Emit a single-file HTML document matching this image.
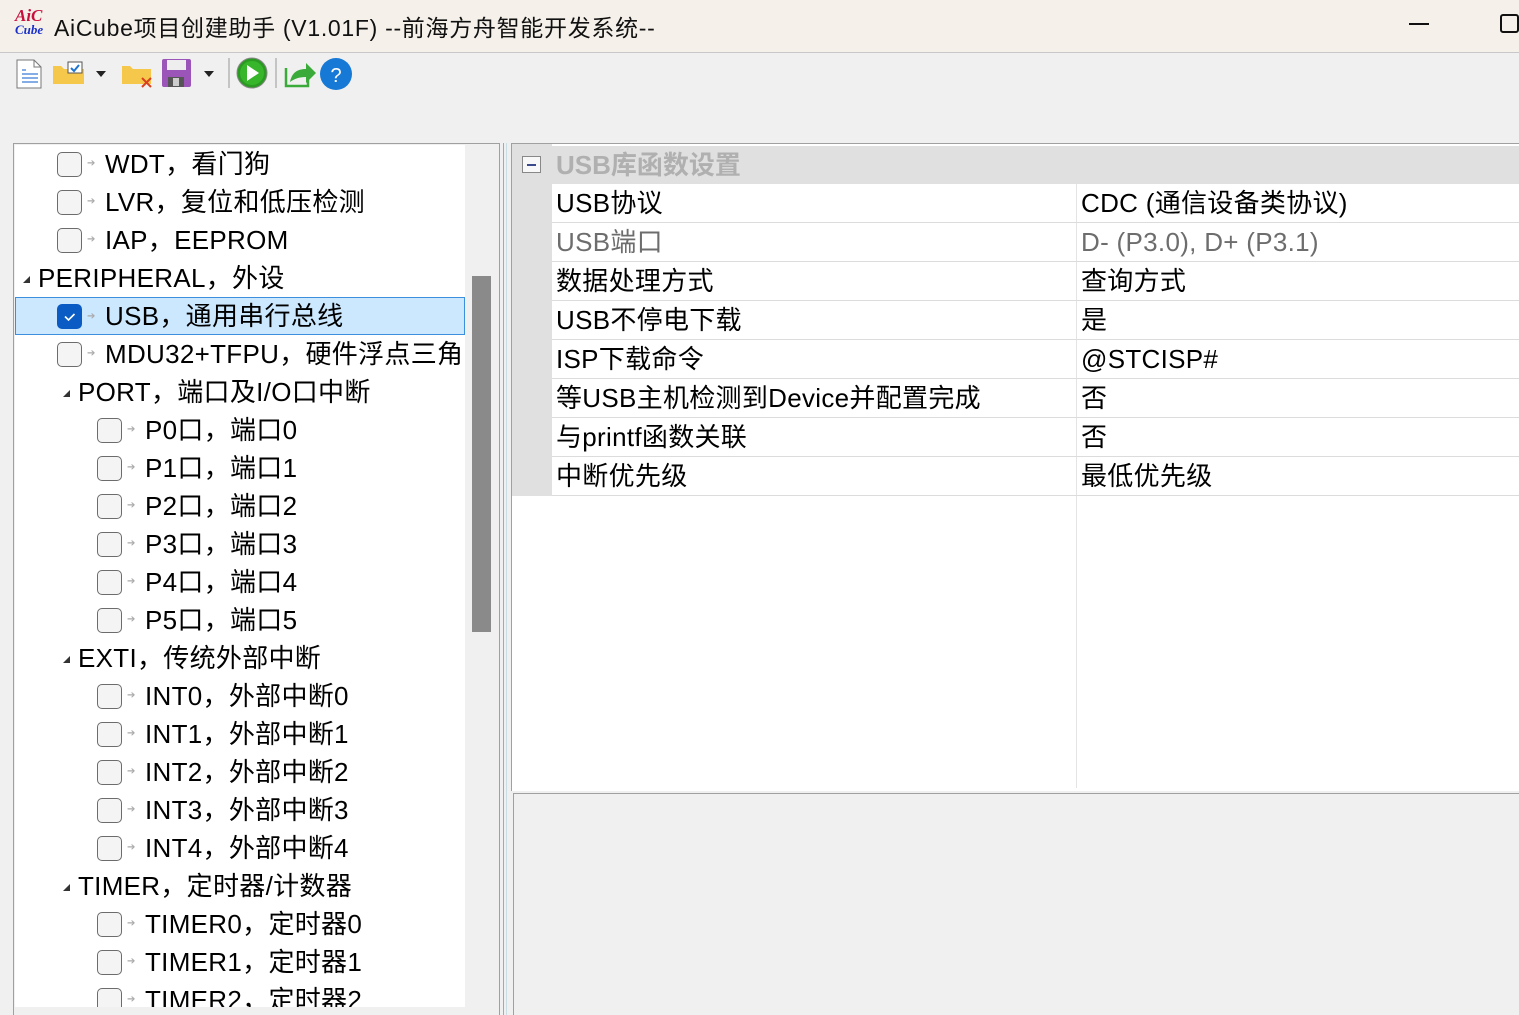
<!DOCTYPE html>
<html><head><meta charset="utf-8">
<style>
*{margin:0;padding:0;box-sizing:border-box}
body{width:1519px;height:1015px;overflow:hidden;background:#f0f0f0;font-family:"Liberation Sans","Noto Sans CJK SC",sans-serif;position:relative}
.abs{position:absolute}
.title{left:0;top:0;width:1519px;height:53px;background:#f5f1ea;border-bottom:1px solid #c8c8c8}
.tt{left:54px;top:9px;font-size:23px;color:#111;white-space:nowrap;letter-spacing:0.7px}
.tree{left:13px;top:143px;width:487px;height:872px;background:#f0f0f0;border:1px solid #a0a0a0;border-bottom:none}
.treew{left:15px;top:145px;width:450px;height:862px;background:#fff;overflow:hidden}
.row{position:absolute;height:38px;width:450px;font-size:26px;line-height:38px;color:#000;white-space:nowrap;letter-spacing:0.3px}
.cb{position:absolute;top:7px;width:25px;height:25px;border:1.5px solid #6c6c6c;border-radius:5px;background:#f4f4f4}
.cb.on{background:#0a5bc4;border-color:#0a5bc4}
.ar{position:absolute;top:0;font-size:10px;color:#aaa}
.tri{position:absolute;top:3px;font-size:7px;color:#333}
.t{position:absolute;top:0}
.grid{left:511px;top:143px;width:1008px;height:648px;background:#fff;border-top:1px solid #a0a0a0;border-left:1px solid #a0a0a0}
.grow{position:absolute;left:40px;width:968px;height:39px;border-bottom:1px solid #dcdcdc;font-size:26px;line-height:38px;white-space:nowrap;letter-spacing:0.3px}
.grow span{position:absolute;top:0}
</style></head><body>
<div class="abs title"></div>
<div class="abs" style="left:15px;top:8px;font:italic bold 17px 'Liberation Serif',serif;color:#c8103e;line-height:15px">AiC</div>
<div class="abs" style="left:15px;top:23px;font:italic bold 13px 'Liberation Serif',serif;color:#1a2fc8;line-height:14px">Cube</div>
<div class="abs tt">AiCube项目创建助手 (V1.01F) --前海方舟智能开发系统--</div>
<div class="abs" style="left:1409px;top:23px;width:20px;height:2px;background:#111"></div>
<div class="abs" style="left:1500px;top:14px;width:19px;height:19px;border:2px solid #111;border-radius:3px"></div>

<svg class="abs" style="left:10px;top:56px" width="350" height="40">
 <path d="M7 4h17l7 7v21H7z" fill="#fff" stroke="#777"/><path d="M24 4v7h7" fill="none" stroke="#777"/>
 <path d="M12 14h4M12 18h16M12 22h16M12 26h16" stroke="#3a7bd5" stroke-width="1.3"/>
 <path d="M43 10h8l3 3h20v15H43z" fill="#f5c84c"/><rect x="58" y="6" width="14" height="11" fill="#fff" stroke="#555"/><path d="M61 12l3 3 5-6" stroke="#1e74d0" stroke-width="2" fill="none"/>
 <path d="M86 15h10l-5 6z" fill="#222"/>
 <path d="M112 10h8l3 3h18v15h-29z" fill="#f5c84c"/><path d="M132 22l9 9M141 22l-9 9" stroke="#d9401e" stroke-width="2"/>
 <rect x="152" y="3" width="29" height="28" rx="2" fill="#9b55b8"/><rect x="157" y="4" width="19" height="10" fill="#eee"/><rect x="158" y="21" width="16" height="10" fill="#555"/><rect x="163" y="22" width="6" height="8" fill="#ccc"/>
 <path d="M194 15h10l-5 6z" fill="#222"/>
 <path d="M219 2v30" stroke="#999"/>
 <circle cx="242" cy="17" r="15" fill="#2a9a22" stroke="#888"/><circle cx="242" cy="17" r="12" fill="#37b52b"/><path d="M237 9v16l12-8z" fill="#fff"/>
 <path d="M266 2v30" stroke="#999"/>
 <path d="M276 12v18h22v-8" fill="none" stroke="#3aab3a" stroke-width="2.5"/><path d="M280 26c2-10 8-13 16-13v-6l10 10-10 10v-6c-7 0-12 2-16 5z" fill="#3aab3a"/>
 <circle cx="326" cy="18" r="16" fill="#1679d6"/><text x="326" y="26" font-size="20" fill="#fff" text-anchor="middle" font-family="Liberation Sans">?</text>
</svg>

<div class="abs tree"></div>
<div class="abs treew">
 <div class="row" style="top:0"><div class="cb" style="left:42px"></div><div class="ar" style="left:72px">➔</div><div class="t" style="left:90px">WDT，看门狗</div></div>
 <div class="row" style="top:38px"><div class="cb" style="left:42px"></div><div class="ar" style="left:72px">➔</div><div class="t" style="left:90px">LVR，复位和低压检测</div></div>
 <div class="row" style="top:76px"><div class="cb" style="left:42px"></div><div class="ar" style="left:72px">➔</div><div class="t" style="left:90px">IAP，EEPROM</div></div>
 <div class="row" style="top:114px"><div class="tri" style="left:8px">◢</div><div class="t" style="left:23px">PERIPHERAL，外设</div></div>
 <div class="row" style="top:152px;background:#cce8ff;border:1px solid #3c8fdc"><div class="cb on" style="left:41px;top:6px"><svg style="position:absolute;left:-1.5px;top:-1.5px" width="25" height="25"><path d="M8 12.5l3.5 3.5 6-6" stroke="#fff" stroke-width="1.6" fill="none"/></svg></div><div class="ar" style="left:71px">➔</div><div class="t" style="left:89px;top:-1px">USB，通用串行总线</div></div>
 <div class="row" style="top:190px"><div class="cb" style="left:42px"></div><div class="ar" style="left:72px">➔</div><div class="t" style="left:90px">MDU32+TFPU，硬件浮点三角函数</div></div>
 <div class="row" style="top:228px"><div class="tri" style="left:48px">◢</div><div class="t" style="left:63px">PORT，端口及I/O口中断</div></div>
 <div class="row" style="top:266px"><div class="cb" style="left:82px"></div><div class="ar" style="left:112px">➔</div><div class="t" style="left:130px">P0口，端口0</div></div>
 <div class="row" style="top:304px"><div class="cb" style="left:82px"></div><div class="ar" style="left:112px">➔</div><div class="t" style="left:130px">P1口，端口1</div></div>
 <div class="row" style="top:342px"><div class="cb" style="left:82px"></div><div class="ar" style="left:112px">➔</div><div class="t" style="left:130px">P2口，端口2</div></div>
 <div class="row" style="top:380px"><div class="cb" style="left:82px"></div><div class="ar" style="left:112px">➔</div><div class="t" style="left:130px">P3口，端口3</div></div>
 <div class="row" style="top:418px"><div class="cb" style="left:82px"></div><div class="ar" style="left:112px">➔</div><div class="t" style="left:130px">P4口，端口4</div></div>
 <div class="row" style="top:456px"><div class="cb" style="left:82px"></div><div class="ar" style="left:112px">➔</div><div class="t" style="left:130px">P5口，端口5</div></div>
 <div class="row" style="top:494px"><div class="tri" style="left:48px">◢</div><div class="t" style="left:63px">EXTI，传统外部中断</div></div>
 <div class="row" style="top:532px"><div class="cb" style="left:82px"></div><div class="ar" style="left:112px">➔</div><div class="t" style="left:130px">INT0，外部中断0</div></div>
 <div class="row" style="top:570px"><div class="cb" style="left:82px"></div><div class="ar" style="left:112px">➔</div><div class="t" style="left:130px">INT1，外部中断1</div></div>
 <div class="row" style="top:608px"><div class="cb" style="left:82px"></div><div class="ar" style="left:112px">➔</div><div class="t" style="left:130px">INT2，外部中断2</div></div>
 <div class="row" style="top:646px"><div class="cb" style="left:82px"></div><div class="ar" style="left:112px">➔</div><div class="t" style="left:130px">INT3，外部中断3</div></div>
 <div class="row" style="top:684px"><div class="cb" style="left:82px"></div><div class="ar" style="left:112px">➔</div><div class="t" style="left:130px">INT4，外部中断4</div></div>
 <div class="row" style="top:722px"><div class="tri" style="left:48px">◢</div><div class="t" style="left:63px">TIMER，定时器/计数器</div></div>
 <div class="row" style="top:760px"><div class="cb" style="left:82px"></div><div class="ar" style="left:112px">➔</div><div class="t" style="left:130px">TIMER0，定时器0</div></div>
 <div class="row" style="top:798px"><div class="cb" style="left:82px"></div><div class="ar" style="left:112px">➔</div><div class="t" style="left:130px">TIMER1，定时器1</div></div>
 <div class="row" style="top:836px"><div class="cb" style="left:82px"></div><div class="ar" style="left:112px">➔</div><div class="t" style="left:130px">TIMER2，定时器2</div></div>
</div>
<div class="abs" style="left:472px;top:276px;width:19px;height:356px;background:#8a8a8a"></div>
<div class="abs" style="left:503px;top:143px;width:1px;height:872px;background:#a8a8a8"></div>
<div class="abs" style="left:506px;top:143px;width:1px;height:872px;background:#c8dde4"></div>

<div class="abs grid">
 <div class="abs" style="left:0;top:0;width:40px;height:352px;background:#e0e0e0"></div>
 <div class="abs" style="left:0;top:2px;width:1008px;height:38px;background:#e0e0e0"></div>
 <div class="abs" style="left:10px;top:12px;width:19px;height:17px;border:1px solid #888;background:#f8f8f8"><div style="margin:7px 0 0 4px;width:9px;height:2px;background:#3a4a8a"></div></div>
 <div class="abs" style="left:44px;top:2px;font-size:26px;line-height:38px;font-weight:bold;color:#b0b0b0;white-space:nowrap">USB库函数设置</div>
 <div class="abs" style="left:564px;top:40px;width:1px;height:604px;background:#e4e4e4"></div>
 <div class="grow" style="top:40px"><span style="left:4px">USB协议</span><span style="left:529px">CDC (通信设备类协议)</span></div>
 <div class="grow" style="top:79px;color:#6d6d6d"><span style="left:4px">USB端口</span><span style="left:529px">D- (P3.0), D+ (P3.1)</span></div>
 <div class="grow" style="top:118px"><span style="left:4px">数据处理方式</span><span style="left:529px">查询方式</span></div>
 <div class="grow" style="top:157px"><span style="left:4px">USB不停电下载</span><span style="left:529px">是</span></div>
 <div class="grow" style="top:196px"><span style="left:4px">ISP下载命令</span><span style="left:529px">@STCISP#</span></div>
 <div class="grow" style="top:235px"><span style="left:4px">等USB主机检测到Device并配置完成</span><span style="left:529px">否</span></div>
 <div class="grow" style="top:274px"><span style="left:4px">与printf函数关联</span><span style="left:529px">否</span></div>
 <div class="grow" style="top:313px"><span style="left:4px">中断优先级</span><span style="left:529px">最低优先级</span></div>
</div>
<div class="abs" style="left:513px;top:793px;width:1006px;height:222px;background:#f0f0f0;border-top:1px solid #a0a0a0;border-left:1px solid #a0a0a0"></div>
<div class="abs" style="left:15px;top:1007px;width:450px;height:8px;background:#f0f0f0"></div>
</body></html>
